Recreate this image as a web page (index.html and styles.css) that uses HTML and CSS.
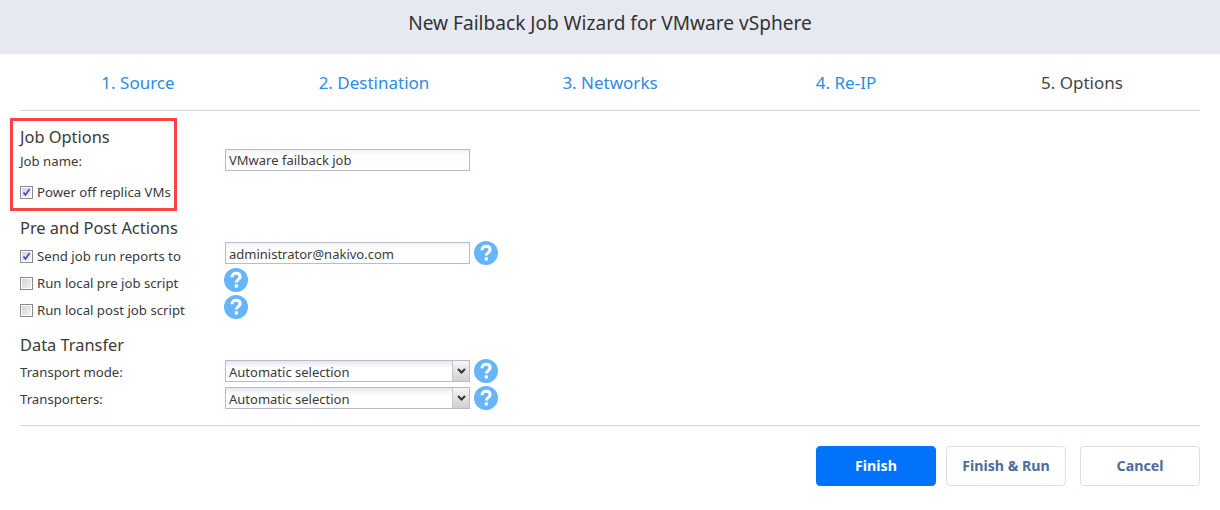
FILE: index.html
```html
<!DOCTYPE html>
<html lang="en">
<head>
<meta charset="utf-8">
<title>New Failback Job Wizard for VMware vSphere</title>
<link rel="stylesheet" href="styles.css">
</head>
<body>
<svg class="sprite" width="0" height="0">
  <symbol id="help" viewBox="0 0 24 24">
    <circle cx="12" cy="12" r="12" fill="#66b5f8"/>
    <path d="M8 9.300c0-2.700 1.800-4.100 4.100-4.100 2.400 0 4 1.400 4 3.500 0 3-3.800 2.900-3.800 5.900" fill="none" stroke="#fff" stroke-width="3"/>
    <rect x="10.700" y="16.300" width="3.200" height="3.200" fill="#fff"/>
  </symbol>
</svg>
<header class="title">New Failback Job Wizard for VMware vSphere</header>
<main class="wizard">
  <nav class="steps">
    <a class="step">1. Source</a>
    <a class="step">2. Destination</a>
    <a class="step">3. Networks</a>
    <a class="step">4. Re-IP</a>
    <a class="step current">5. Options</a>
  </nav>

  <section class="group group-job">
    <h2>Job Options</h2>
    <div class="row row-first">
      <span class="label nudge-small">Job name:</span>
      <span class="input">VMware failback job</span>
    </div>
    <div class="row row-check">
      <span class="label"><span class="check on"></span>Power off replica VMs</span>
    </div>
    <div class="callout"></div>
  </section>

  <section class="group group-actions">
    <h2>Pre and Post Actions</h2>
    <div class="row row-a">
      <span class="label nudge"><span class="check on"></span>Send job run reports to</span>
      <span class="input low">administrator@nakivo.com</span>
      <svg class="help"><use href="#help"/></svg>
    </div>
    <div class="row row-b">
      <span class="label nudge"><span class="check"></span>Run local pre job script</span>
      <svg class="help flush"><use href="#help"/></svg>
    </div>
    <div class="row row-b">
      <span class="label nudge"><span class="check"></span>Run local post job script</span>
      <svg class="help flush"><use href="#help"/></svg>
    </div>
  </section>

  <section class="group group-data">
    <h2>Data Transfer</h2>
    <div class="row row-s">
      <span class="label nudge-small">Transport mode:</span>
      <span class="input low select">Automatic selection<span class="arrow"><svg width="9" height="6" viewBox="0 0 9 6"><path d="M1 1l3.500 3.500L8 1" fill="none" stroke="#333" stroke-width="2"/></svg></span></span>
      <svg class="help"><use href="#help"/></svg>
    </div>
    <div class="row row-s">
      <span class="label nudge-small">Transporters:</span>
      <span class="input low select">Automatic selection<span class="arrow"><svg width="9" height="6" viewBox="0 0 9 6"><path d="M1 1l3.500 3.500L8 1" fill="none" stroke="#333" stroke-width="2"/></svg></span></span>
      <svg class="help"><use href="#help"/></svg>
    </div>
  </section>

  <footer class="actions">
    <button class="btn primary">Finish</button>
    <button class="btn">Finish &amp; Run</button>
    <button class="btn cancel">Cancel</button>
  </footer>
</main>
</body>
</html>
```
FILE: styles.css
```css
* { box-sizing: border-box; }
html, body { margin: 0; padding: 0; }
body {
  width: 1220px;
  height: 510px;
  background: #fff;
  color: #3a3a3a;
  font-family: "Noto Sans", "DejaVu Sans", sans-serif;
  font-size: 13px;
  overflow: hidden;
}
.sprite { position: absolute; }
.title {
  height: 54px;
  background: #e6e9f2;
  color: #333;
  font-size: 19.100px;
  line-height: 46px;
  text-align: center;
}
.wizard { padding: 0 20px; }
.steps {
  display: grid;
  grid-template-columns: repeat(5, 1fr);
  height: 57px;
  border-bottom: 1px solid #d2d2d2;
}
.step {
  color: #2f8ae8;
  font-size: 17px;
  line-height: 57px;
  text-align: center;
}
.step.current { color: #444; }
.group { position: relative; }
.group h2 {
  margin: 0;
  font-size: 16.400px;
  font-weight: 400;
  line-height: 22px;
  color: #3a3a3a;
}
.group-job { padding-top: 15px; height: 106px; }
.group-actions { height: 117px; }
.group-actions h2 { height: 23px; }
.group-data { height: 91px; }
.group-data h2 { height: 22px; }
.row { display: flex; align-items: center; }
.row-first { height: 24px; }
.row-check { height: 24px; margin-top: 8px; }
.row-a { height: 24px; margin-top: 1px; }
.row-b { height: 24px; margin-top: 3px; }
.row-s { height: 24px; margin-top: 3px; }
.label { display: flex; align-items: center; width: 205px; flex: none; white-space: nowrap; font-size: 13.200px; }
.nudge { padding-top: 6px; }
.nudge-small { padding-top: 2px; }
.input {
  display: block;
  position: relative;
  width: 245px;
  height: 22px;
  border: 1px solid #b9bace;
  padding-left: 3px;
  line-height: 20px;
  background: linear-gradient(#f1f3f3, #fff 6px);
  color: #3a3a3a;
}
.low { line-height: 22px; }
.select { background: linear-gradient(#e4e8ea, #fff 7px); }
.arrow {
  position: absolute;
  right: 0;
  top: 0;
  width: 17px;
  height: 20px;
  display: flex;
  align-items: center;
  justify-content: center;
  border-left: 1px solid #c6c6ce;
  background: linear-gradient(#f6f6f6, #d0d0d0);
}
.check {
  width: 13px;
  height: 13px;
  margin-right: 4px;
  flex: none;
  border: 1px solid #8a8a8a;
  box-shadow: inset 0 0 0 1px #fff;
  background: linear-gradient(135deg, #cfd0d8, #f6f6fa);
}
.check.on {
  background: url("data:image/svg+xml,%3Csvg xmlns='http://www.w3.org/2000/svg' width='11' height='11'%3E%3Cpath d='M2.500 5.500l2 2.500 4-6' fill='none' stroke='%233a4ca8' stroke-width='1.600'/%3E%3C/svg%3E") center no-repeat, linear-gradient(135deg, #cfd0d8, #f6f6fa);
}
.help { width: 24px; height: 24px; margin-left: 4px; flex: none; }
.help.flush { margin-left: -1px; }
.callout {
  position: absolute;
  left: -10px;
  top: 7px;
  width: 167px;
  height: 93px;
  border: 3px solid #fb4346;
}
.actions {
  display: flex;
  justify-content: flex-end;
  gap: 10px;
  padding-top: 20px;
  border-top: 1px solid #d2d2d2;
}
.btn {
  width: 120px;
  height: 40px;
  padding: 0 0 2px;
  border: 1px solid #d7e0ec;
  border-radius: 4px;
  background: #fff;
  color: #4d6d9c;
  font: 700 14.200px "Noto Sans", "DejaVu Sans", sans-serif;
}
.btn.primary { background: #0073fa; border-color: #0073fa; color: #fff; }
.btn.cancel { margin-left: 4px; }
```
